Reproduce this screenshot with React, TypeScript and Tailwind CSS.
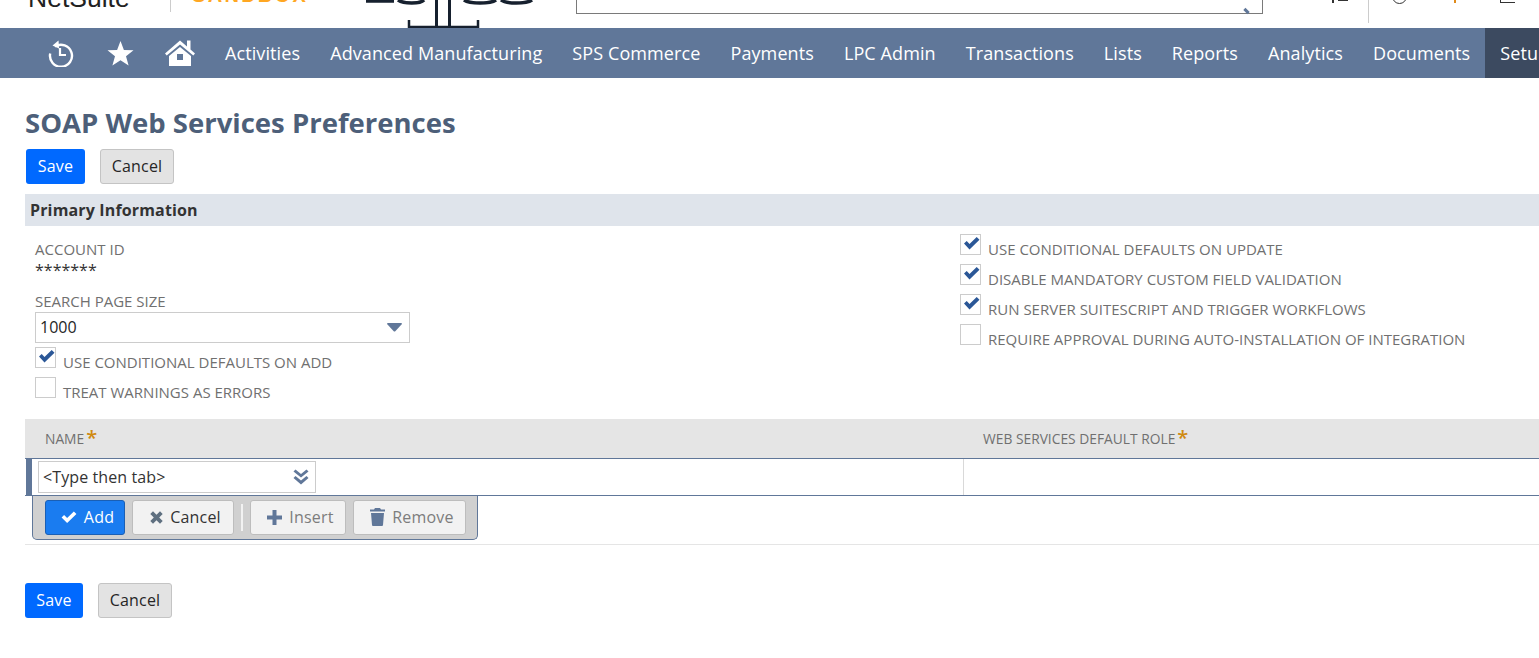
import React from 'react';

const navItems = ['Activities', 'Advanced Manufacturing', 'SPS Commerce', 'Payments', 'LPC Admin', 'Transactions', 'Lists', 'Reports', 'Analytics', 'Documents'];

const HistoryIcon = () => (
  <svg className="shrink-0" width="28" height="28" viewBox="0 0 28 28" fill="none" stroke="white" strokeWidth="2.4">
    <path d="M8 7.5 A11 11 0 1 1 3.2 14.5" />
    <path d="M11.5 1.5 L5.5 6.5 L12 9.5 Z" fill="white" stroke="none" />
    <path d="M13 9 V16 H19" strokeWidth="2.2" />
  </svg>
);

const StarIcon = () => (
  <svg width="27" height="27" viewBox="0 0 27 27" fill="white">
    <path d="M13.5 1 L16.9 10 L26.5 10.3 L19 16.2 L21.6 25.6 L13.5 20.3 L5.4 25.6 L8 16.2 L0.5 10.3 L10.1 10 Z" />
  </svg>
);

const HomeIcon = () => (
  <svg width="30" height="28" viewBox="0 0 30 28" fill="white">
    <path d="M15 1.5 L22 7.5 V1.5 H25.5 V10.5 L30 14.5 L28.3 16.5 L15 5.6 L1.7 16.5 L0 14.5 Z" />
    <path d="M15 8 L26 17 V27 H4 V17 Z M12 15 V21 H18 V15 Z" fillRule="evenodd" />
  </svg>
);

const CheckBox = ({ checked }: { checked?: boolean }) => (
  <span className="relative block w-[21px] h-[21px] shrink-0 border border-[#cccccc] bg-white">
    {checked && (
      <svg className="absolute left-[2px] top-[1px]" width="17" height="15" viewBox="0 0 17 15" fill="#2b5797">
        <path d="M1 7.5 L3.7 5 L6.5 8 L13.7 1 L16.5 3.7 L6.5 13.5 Z" />
      </svg>
    )}
  </span>
);

const CheckRow = ({ label, checked }: { label: string; checked?: boolean }) => (
  <div className="flex h-[30px] items-start gap-[7px]">
    <CheckBox checked={checked} />
    <span className="mt-[5px] text-[15px] leading-[20px] text-[#707070] whitespace-nowrap">{label}</span>
  </div>
);

const PageButtons = ({ saveWidth }: { saveWidth: string }) => (
  <div className="flex gap-[15px]">
    <button className={`h-[35px] rounded-[3px] bg-[#0069ff] pb-[1px] text-white text-[16px] font-medium tracking-[0.2px] ${saveWidth}`}>Save</button>
    <button className="h-[35px] w-[74px] rounded-[3px] bg-[#e3e3e3] border border-[#c4c4c4] pb-[1px] text-[#262626] text-[16px] font-medium tracking-[0.2px]">Cancel</button>
  </div>
);

const ToolButton = ({ icon, label, className }: { icon: React.ReactNode; label: string; className: string }) => (
  <button className={`h-[35px] flex items-center justify-center gap-[7px] rounded-[3px] border pl-[5px] text-[16px] font-medium tracking-[0.2px] ${className}`}>
    {icon}
    {label}
  </button>
);

const App: React.FC = () => {
  return (
    <div className="w-[1539px] h-[658px] overflow-hidden bg-white text-[#262626]" style={{ fontFamily: '"Open Sans", sans-serif' }}>
      {/* page is scrolled, so only the bottom of the header shows */}
      <header className="relative h-[28px] overflow-hidden">
        <span className="absolute left-[28px] -top-[19px] text-[26.5px] leading-[34px] text-[#222222]" style={{ fontFamily: '"Liberation Sans", sans-serif' }}>NetSuite</span>
        <span className="absolute left-[170px] top-0 h-[12px] w-px bg-[#cccccc]"></span>
        <span className="absolute left-[192px] -top-[17px] text-[20px] leading-[24px] font-bold tracking-[2.3px] text-[#ffa722]" style={{ fontFamily: '"Liberation Sans", sans-serif' }}>SANDBOX</span>
        <svg className="absolute left-[360px] top-0" width="180" height="28" viewBox="0 0 180 28" fill="none" stroke="#16202e">
          <path d="M6 1 H34 M38 0 C44 4 60 4 64 0 M104 0 C110 4 130 4 136 0 M141 0 C146 4 166 4 172 0" strokeWidth="3.5" />
          <path d="M49 20 V27 H118 V20" strokeWidth="2.5" />
          <path d="M76.5 0 V27 M89.5 0 V27" strokeWidth="3" />
        </svg>
        <div className="absolute left-[576px] -top-[10px] h-[24px] w-[687px] border border-[#7a7a7a] bg-white">
          <span className="absolute right-[14px] -bottom-px h-[6px] w-[3px] -rotate-45 bg-[#607799]"></span>
        </div>
        <span className="absolute left-[1332px] top-0 h-[3px] w-[2px] bg-[#333333]"></span>
        <span className="absolute left-[1338px] top-0 h-[1px] w-[10px] bg-[#333333]"></span>
        <span className="absolute left-[1368px] top-0 h-[23px] w-px bg-[#cccccc]"></span>
        <span className="absolute left-[1392px] -top-[14px] h-[18px] w-[15px] rounded-full border border-[#333333]"></span>
        <span className="absolute left-[1454px] top-0 h-[3px] w-[2px] bg-[#e08b1a]"></span>
        <span className="absolute left-[1500px] top-0 h-[3px] w-[15px] border-b border-l border-[#333333]"></span>
      </header>

      <nav className="flex h-[50px] items-center overflow-hidden bg-[#607799] pl-[47px] text-[18px] font-medium tracking-[0.1px] text-white whitespace-nowrap">
        <HistoryIcon />
        <span className="ml-[32px] shrink-0"><StarIcon /></span>
        <span className="ml-[31px] shrink-0"><HomeIcon /></span>
        <div className="ml-[15px] flex h-full shrink-0 items-center">
          {navItems.map((item) => (
            <span key={item} className="px-[15px]">{item}</span>
          ))}
          <span className="flex h-full items-center bg-[#3c4a60] pl-[15px] pr-[15px]">Setup</span>
        </div>
      </nav>

      <main className="pl-[25px]">
        <h1 className="mt-[27px] h-[36px] text-[27.5px] leading-[36px] font-bold text-[#4d5f79] whitespace-nowrap">SOAP Web Services Preferences</h1>
        <div className="mt-[8px] ml-px"><PageButtons saveWidth="w-[59px]" /></div>

        <div className="mt-[10px] flex h-[32px] items-center bg-[#dfe4eb] pl-[5px] text-[16px] font-bold tracking-[0.15px] text-[#333333]">Primary Information</div>

        <div className="flex h-[193px] pl-[10px]">
          <div className="w-[925px] pt-[14px]">
            <div className="text-[15px] leading-[19px] text-[#707070]">ACCOUNT ID</div>
            <div className="mt-[2px] text-[16px] leading-[19px] text-[#333333]">*******</div>
            <div className="mt-[12px] text-[15px] leading-[19px] text-[#707070]">SEARCH PAGE SIZE</div>
            <div className="mt-[1px] flex h-[31px] w-[375px] items-center justify-between border border-[#cccccc] pb-[1px] pl-[4px] pr-[7px] text-[16px]">
              1000
              <svg width="15" height="9" viewBox="0 0 15 9" fill="#607799"><path d="M0 1 Q0 0 1 0 H14 Q15 0 15 1 L8.5 8 Q7.5 9 6.5 8 Z" /></svg>
            </div>
            <div className="mt-[4px]">
              <CheckRow label="USE CONDITIONAL DEFAULTS ON ADD" checked />
              <CheckRow label="TREAT WARNINGS AS ERRORS" />
            </div>
          </div>
          <div className="pt-[8px]">
            <CheckRow label="USE CONDITIONAL DEFAULTS ON UPDATE" checked />
            <CheckRow label="DISABLE MANDATORY CUSTOM FIELD VALIDATION" checked />
            <CheckRow label="RUN SERVER SUITESCRIPT AND TRIGGER WORKFLOWS" checked />
            <CheckRow label="REQUIRE APPROVAL DURING AUTO-INSTALLATION OF INTEGRATION" />
          </div>
        </div>

        <div className="border-b border-[#e5e5e5] pb-[4px]">
          <div className="flex h-[39px] items-center bg-[#e5e5e5] pt-[2px] text-[13.8px] text-[#707070]">
            <div className="flex w-[958px] items-start pl-[20px]">NAME<span className="ml-[2px] -mt-[1px] text-[20px] leading-[20px] font-semibold text-[#d08a10]">*</span></div>
            <div className="flex items-start">WEB SERVICES DEFAULT ROLE<span className="ml-[2px] -mt-[1px] text-[20px] leading-[20px] font-semibold text-[#d08a10]">*</span></div>
          </div>
          <div className="flex h-[38px] border-y border-[#607799] pl-[1px]">
            <span className="w-[6px] bg-[#607799]"></span>
            <div className="flex w-[932px] items-center border-r border-[#d9d9d9] pl-[6px]">
              <div className="flex h-[32px] w-[278px] items-center justify-between border border-[#cccccc] pl-[4px] pr-[6px] text-[16px] tracking-[0.1px] text-[#333333]">
                {'<Type then tab>'}
                <svg width="16" height="16" viewBox="0 0 16 16" fill="#607799">
                  <path d="M0.5 2.5 L2.5 0.5 L8 5 L13.5 0.5 L15.5 2.5 L8 8.5 Z" />
                  <path d="M0.5 9 L2.5 7 L8 11.5 L13.5 7 L15.5 9 L8 15.5 Z" />
                </svg>
              </div>
            </div>
          </div>
          <div className="ml-[7px] flex h-[44px] w-[446px] items-center rounded-b-[5px] border border-t-0 border-[#607799] bg-[#d0d0d0] pb-[1px] pl-[12px]">
            <ToolButton
              icon={<svg width="16" height="13" viewBox="0 0 17 14" fill="white"><path d="M0.5 7 L3.2 4.3 L6.5 7.5 L13.7 0.5 L16.5 3.2 L6.5 13 Z" /></svg>}
              label="Add"
              className="w-[80px] border-[#1a5fb4] bg-[#1a7cf0] text-white"
            />
            <ToolButton
              icon={<svg width="13" height="13" viewBox="0 0 13 13" fill="#5f7080"><path d="M3 0.3 L6.5 3.8 L10 0.3 L12.7 3 L9.2 6.5 L12.7 10 L10 12.7 L6.5 9.2 L3 12.7 L0.3 10 L3.8 6.5 L0.3 3 Z" /></svg>}
              label="Cancel"
              className="ml-[7px] w-[102px] border-[#bdbdbd] bg-[#f2f2f2] text-[#333333]"
            />
            <span className="mx-[7px] h-[27px] w-[2px] bg-[#f2f2f2]"></span>
            <ToolButton
              icon={<svg width="15" height="15" viewBox="0 0 15 15" fill="#607799"><path d="M5.5 0 H9.5 V5.5 H15 V9.5 H9.5 V15 H5.5 V9.5 H0 V5.5 H5.5 Z" /></svg>}
              label="Insert"
              className="w-[96px] border-[#bdbdbd] bg-[#f2f2f2] text-[#7d7d7d]"
            />
            <ToolButton
              icon={<svg width="15" height="18" viewBox="0 0 15 18" fill="#607799"><path d="M5 0 H10 L11 1.5 H15 V3.5 H0 V1.5 H4 Z" /><path d="M1 5 H14 L13 17 Q13 18 12 18 H3 Q2 18 2 17 Z" /></svg>}
              label="Remove"
              className="ml-[7px] w-[113px] border-[#bdbdbd] bg-[#f2f2f2] text-[#7d7d7d]"
            />
          </div>
        </div>

        <div className="mt-[38px]"><PageButtons saveWidth="w-[58px]" /></div>
      </main>
    </div>
  );
};

export default App;
